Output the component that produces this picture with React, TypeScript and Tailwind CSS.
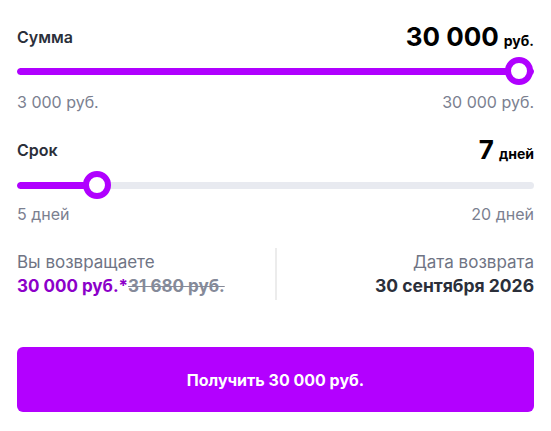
import React from "react";

function Slider({ pct, thumbX }: { pct: number; thumbX: string }) {
  return (
    <div className="relative h-[28px] flex items-center">
      <div className="h-[7px] w-full rounded-full bg-[#e8eaf0] overflow-hidden">
        <div className="h-full rounded-full bg-[#b000ff]" style={{ width: `${pct}%` }} />
      </div>
      <div
        className="absolute top-0 w-[28px] h-[28px] rounded-full border-[6px] border-[#b000ff] bg-white"
        style={{ left: thumbX }}
      />
    </div>
  );
}

export default function App() {
  return (
    <div
      className="w-[551px] h-[431px] bg-white px-[17px] pt-[22px]"
      style={{ fontFamily: "Inter, 'Noto Sans', sans-serif" }}
    >
      <div className="flex items-center justify-between h-[30px]">
        <span className="text-[16px] font-semibold text-[#2b2f3a]">Сумма</span>
        <span className="text-black font-bold flex items-baseline">
          <span className="text-[26px] leading-[30px]">30 000</span>
          <span className="text-[14px] ml-[5px]">руб.</span>
        </span>
      </div>
      <div className="mt-[5px]">
        <Slider pct={100} thumbX="calc(100% - 29px)" />
      </div>
      <div className="mt-[7px] flex justify-between h-[20px] items-center text-[16px] text-[#7b8090]">
        <span>3 000 руб.</span>
        <span>30 000 руб.</span>
      </div>

      <div className="mt-[23px] flex items-center justify-between h-[30px]">
        <span className="text-[16px] font-semibold text-[#2b2f3a]">Срок</span>
        <span className="text-black font-bold flex items-baseline">
          <span className="text-[26px] leading-[30px]">7</span>
          <span className="text-[14px] ml-[5px]">дней</span>
        </span>
      </div>
      <div className="mt-[6px]">
        <Slider pct={16} thumbX="66px" />
      </div>
      <div className="mt-[5px] flex justify-between h-[20px] items-center text-[16px] text-[#7b8090]">
        <span>5 дней</span>
        <span>20 дней</span>
      </div>

      <div className="mt-[24px] flex h-[52px]">
        <div className="flex-1 flex flex-col pt-[2px]">
          <span className="text-[17px] leading-[24px] text-[#6f7484]">Вы возвращаете</span>
          <span className="text-[17px] leading-[24px] font-bold">
            <span className="text-[#8c00c9]">30 000 руб.*</span>
            <span className="text-[#858a99] line-through">31 680 руб.</span>
          </span>
        </div>
        <div className="w-[2px] bg-[#ececec]" />
        <div className="flex-1 flex flex-col items-end pt-[2px]">
          <span className="text-[17px] leading-[24px] text-[#6f7484]">Дата возврата</span>
          <span className="text-[17.5px] leading-[24px] font-bold text-[#2b2f3a]">30 сентября 2026</span>
        </div>
      </div>

      <button className="mt-[47px] w-full h-[65px] rounded-[6px] bg-[#b300ff] text-white text-[16px] font-bold flex items-center justify-center">
        Получить 30 000 руб.
      </button>
    </div>
  );
}
